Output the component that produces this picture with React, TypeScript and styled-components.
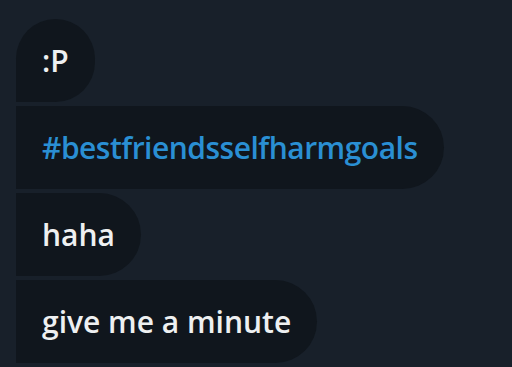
import React from "react";
import styled, { createGlobalStyle } from "styled-components";

const GlobalStyle = createGlobalStyle`
  html, body {
    margin: 0;
    padding: 0;
    background: #18202a;
  }
`;

const Thread = styled.div`
  width: 512px;
  height: 367px;
  overflow: hidden;
  box-sizing: border-box;
  padding: 19px 0 0 16px;
  display: flex;
  flex-direction: column;
  align-items: flex-start;
  gap: 4px;
  background: #18202a;
  font-family: "Open Sans", "Noto Sans", sans-serif;
`;

const Bubble = styled.div<{ $first?: boolean }>`
  box-sizing: border-box;
  height: 83px;
  display: flex;
  align-items: center;
  padding: 0 26px 0 26px;
  background: #10161d;
  border-radius: ${(p) => (p.$first ? "42px 42px 42px 0" : "0 42px 42px 0")};
  font-size: 30px;
  font-weight: 600;
  color: #eef0f1;
  white-space: nowrap;
`;

const Hashtag = styled.span`
  color: #2a8fd3;
  letter-spacing: -0.5px;
`;

const messages = [":P", "#bestfriendsselfharmgoals", "haha", "give me a minute"];

export default function App() {
  return (
    <>
      <GlobalStyle />
      <Thread>
        {messages.map((text, i) => (
          <Bubble key={i} $first={i === 0}>
            {text.startsWith("#") ? <Hashtag>{text}</Hashtag> : text}
          </Bubble>
        ))}
      </Thread>
    </>
  );
}
